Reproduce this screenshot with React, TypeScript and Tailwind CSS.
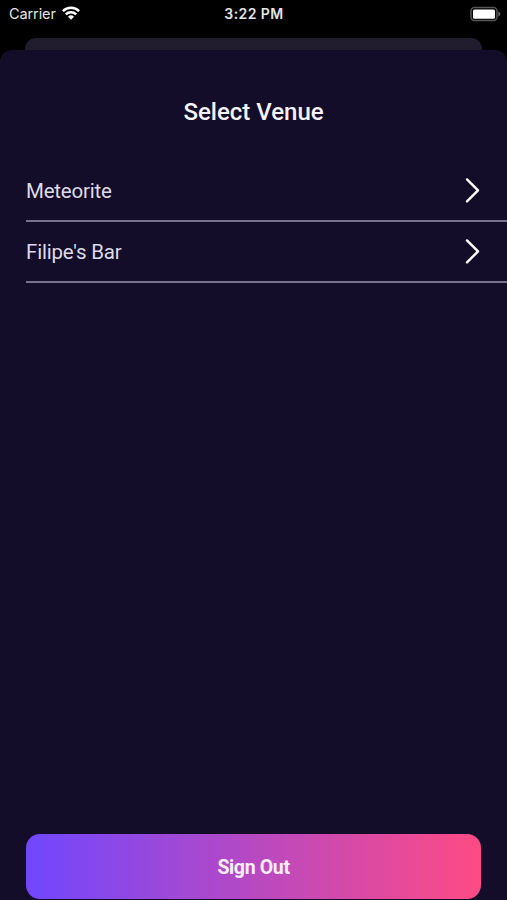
import { useState } from 'react';

const venues = ["Meteorite", "Filipe's Bar"];

function StatusBar() {
  return (
    <div className="grid grid-cols-3 items-center h-[28px] pl-[9px] pr-[6px] text-[14px] text-[#e4e4e4] font-['Inter',sans-serif]">
      <div className="flex items-center gap-[6px]">
        <span className="text-[14.5px] leading-[28px] tracking-[-0.1px]">Carrier</span>
        <svg className="mb-[2px]" width="18" height="14" viewBox="0 0 18 14" fill="none" stroke="white" strokeWidth="2.5">
          <path d="M0.9 5.1a11.6 11.6 0 0 1 16.2 0" />
          <path d="M3.8 8.4a7.4 7.4 0 0 1 10.4 0" />
          <path d="M9 13.8 6 10.8a4.3 4.3 0 0 1 6 0z" fill="white" stroke="none" />
        </svg>
      </div>
      <span className="pb-[2px] pr-[2px] text-center font-semibold tracking-[0.45px]">3:22 PM</span>
      <svg className="justify-self-end mb-px" width="31" height="16" viewBox="0 0 31 16">
        <rect x="1" y="1.4" width="26" height="13" rx="3.5" fill="none" stroke="#555" strokeWidth="1.5" />
        <rect x="3" y="3.4" width="22" height="9.4" rx="1.5" fill="white" />
        <path d="M28.3 5.6c2.8 1.2 2.8 3.6 0 4.8z" fill="#666" />
      </svg>
    </div>
  );
}

function VenueRow({ name, onSelect }: { name: string; onSelect: () => void }) {
  return (
    <button
      onClick={onSelect}
      className="flex items-center justify-between w-full h-[61px] pr-[27px] border-b-2 border-[#77718e] text-left"
    >
      <span className="pt-px text-[20.5px] tracking-[-0.2px] text-[#dedbe8]">{name}</span>
      <svg className="mb-px" width="17" height="28" viewBox="0 0 17 28" fill="none" stroke="white" strokeWidth="2.4" strokeLinecap="round" strokeLinejoin="round">
        <path d="M4 3.4 15 14.4 4 25.4" />
      </svg>
    </button>
  );
}

export default function App() {
  const [, setVenue] = useState<string | null>(null);

  return (
    <div className="flex flex-col h-screen overflow-hidden bg-black font-['Roboto',sans-serif]">
      <StatusBar />
      {/* edge of the screen underneath the sheet */}
      <div className="mt-[10px] mx-[25px] h-[12px] shrink-0 rounded-t-[11px] bg-[#211d2e]" />
      <div className="flex flex-col flex-1 rounded-t-[12px] bg-[#140d29]">
        <h1 className="mt-[44px] text-center text-[24px] leading-[36px] font-medium text-[#f5f3fa]">
          Select Venue
        </h1>
        <div className="mt-[31px] pl-[26px]">
          {venues.map((name) => (
            <VenueRow key={name} name={name} onSelect={() => setVenue(name)} />
          ))}
        </div>
        <button className="mt-auto mx-[26px] mb-px h-[65px] pt-[2px] rounded-[14px] bg-linear-to-r/srgb from-[#7047ff] to-[#ff4b84] text-[19.5px] tracking-[-0.35px] font-bold text-[#fbeefa]">
          Sign Out
        </button>
      </div>
    </div>
  );
}
